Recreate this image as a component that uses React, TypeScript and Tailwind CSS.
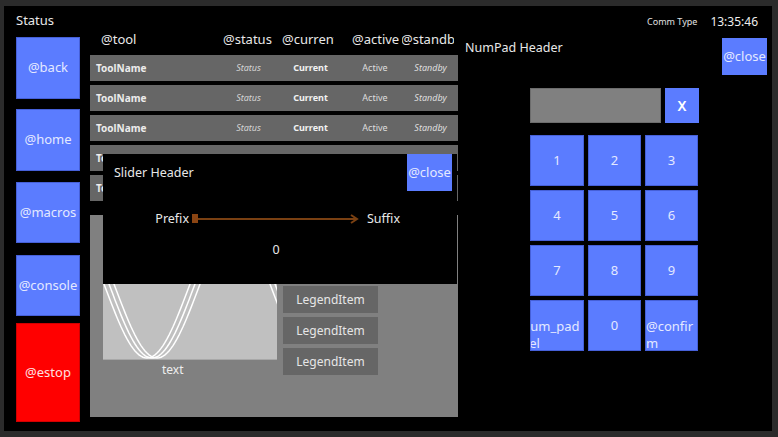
import React from "react";

function NavBtn({ className, children, red }: { className: string; children: React.ReactNode; red?: boolean }) {
  return (
    <div
      className={
        (red
          ? "bg-[#ff0000] border border-[#d00000] text-[#ffe0e0] "
          : "bg-[#5b7cff] border border-[#4660d8] text-[#e4e9ff] ") +
        "w-[64px] flex items-center justify-center text-[13px] whitespace-nowrap overflow-hidden " +
        className
      }
    >
      {children}
    </div>
  );
}

function wave(dx: number) {
  const pts: string[] = [];
  for (let x = -10; x <= 186; x += 2) {
    const y = 60 + 70 * Math.cos((2 * Math.PI * (x - 49 - dx)) / 166);
    pts.push(`${x},${y.toFixed(1)}`);
  }
  return "M" + pts.join(" L");
}

const rows = [0, 1, 2, 3, 4];

export default function App() {
  return (
    <div className="w-[778px] h-[437px] bg-[#2b2b2b] pl-[4px] pt-[6px] overflow-hidden font-['Noto_Sans','Open_Sans',sans-serif]">
      <div className="w-[768px] h-[425px] bg-black flex">
        {/* Left column */}
        <div className="ml-[12px] w-[64px] flex flex-col shrink-0">
          <div className="mt-[5px] h-[18px] leading-[18px] text-[13px] text-[#e8e8e8] whitespace-nowrap">Status</div>
          <NavBtn className="mt-[8px] h-[62px]">@back</NavBtn>
          <NavBtn className="mt-[10px] h-[62px]">@home</NavBtn>
          <NavBtn className="mt-[11px] h-[61px]">@macros</NavBtn>
          <NavBtn className="mt-[12px] h-[61px]">@console</NavBtn>
          <NavBtn red className="mt-[7px] h-[99px]">@estop</NavBtn>
        </div>

        {/* Middle column */}
        <div className="ml-[10px] w-[368px] shrink-0 relative flex flex-col pt-[23px]">
          <div className="flex h-[22px] items-center text-[13px] text-[#e8e8e8] whitespace-nowrap">
            <div className="w-[133px] pl-[11px]">@tool</div>
            <div className="w-[59px]">@status</div>
            <div className="w-[52px] overflow-hidden">@current</div>
            <div className="ml-[18px] w-[50px] overflow-hidden">@active</div>
            <div className="w-[52px] overflow-hidden">
              <span className="ml-[-1px]">@standby</span>
            </div>
          </div>
          <div className="mt-[4px] flex flex-col gap-[4px]">
            {rows.map((r) => (
              <div key={r} className="h-[26px] bg-[#666666] flex items-center whitespace-nowrap">
                <div className="w-[133px] pl-[6px] text-[10px] font-bold text-[#ececec]">ToolName</div>
                <div className="w-[51px] text-center text-[9px] italic text-[#d4d4d4]">Status</div>
                <div className="w-[73px] text-center text-[9px] font-bold text-[#f2f2f2]">Current</div>
                <div className="w-[56px] text-center text-[9px] text-[#dedede]">Active</div>
                <div className="w-[55px] text-center text-[9px] italic text-[#dedede]">Standby</div>
              </div>
            ))}
          </div>

          {/* Chart panel */}
          <div className="mt-[14px] h-[202px] bg-[#808080] flex pl-[13px] pt-[13px]">
            <div className="w-[174px] flex flex-col shrink-0">
              <div className="h-[132px] bg-[#c0c0c0] border-b border-[#a8a8a8] overflow-hidden">
                <svg width="174" height="132" viewBox="0 0 174 132">
                  {[-5, 0, 5].map((d) => (
                    <path key={d} d={wave(d)} fill="none" stroke="#ffffff" strokeWidth="1.5" />
                  ))}
                </svg>
              </div>
              <div className="mt-[1px] pl-[59px] text-[12px] leading-[17px] text-[#eeeeee]">text</div>
            </div>
            <div className="ml-[6px] mt-[58px] flex flex-col gap-[4px]">
              {[0, 1, 2].map((i) => (
                <div key={i} className="w-[95px] h-[27px] bg-[#666666] flex items-center justify-center text-[12px] text-[#e6e6e6]">
                  LegendItem
                </div>
              ))}
            </div>
          </div>

          {/* Slider modal */}
          <div className="absolute left-[13px] top-[148px] w-[354px] h-[130px] bg-black flex flex-col">
            <div className="flex items-start h-[37px]">
              <div className="ml-[11px] mt-[11px] leading-[16px] text-[12.5px] text-[#e8e8e8] whitespace-nowrap">Slider Header</div>
              <div className="ml-auto mr-[5px] w-[45px] h-[37px] bg-[#5b7cff] flex items-center justify-center text-[13px] text-[#e4e9ff] overflow-hidden whitespace-nowrap">
                @close
              </div>
            </div>
            <div className="mt-[19px] h-[18px] flex items-center">
              <div className="w-[86px] text-right text-[12.5px] text-[#e8e8e8]">Prefix</div>
              <svg className="ml-[3px]" width="168" height="10" viewBox="0 0 168 10">
                <line x1="6" y1="5" x2="165" y2="5" stroke="#7a4012" strokeWidth="2" />
                <polyline points="159,1 165,5 159,9" fill="none" stroke="#7a4012" strokeWidth="2" />
                <rect x="0" y="0" width="6" height="9" fill="#8b4513" />
              </svg>
              <div className="ml-[7px] text-[12.5px] text-[#e8e8e8]">Suffix</div>
            </div>
            <div className="mt-[14px] pr-[8px] text-center text-[12.5px] leading-[16px] text-[#e8e8e8]">0</div>
          </div>
        </div>

        {/* Right column */}
        <div className="flex-1 flex flex-col">
          <div className="mt-[3px] h-[25px] flex items-center justify-end pr-[14px] whitespace-nowrap">
            <div className="text-[9px] text-[#e0e0e0]">Comm Type</div>
            <div className="ml-[13px] text-[12px] text-[#eeeeee]">13:35:46</div>
          </div>
          <div className="mt-[4px] flex items-start">
            <div className="pl-[7px] mt-[2px] leading-[16px] text-[12.5px] text-[#e8e8e8] whitespace-nowrap">NumPad Header</div>
            <div className="ml-auto mr-[5px] w-[45px] h-[37px] bg-[#5b7cff] flex items-center justify-center text-[13px] text-[#e4e9ff] overflow-hidden whitespace-nowrap">
              @close
            </div>
          </div>
          <div className="mt-[13px] pl-[72px] flex">
            <div className="w-[131px] h-[35px] bg-[#808080] border border-[#6c6c6c]" />
            <div className="ml-[4px] w-[34px] h-[35px] bg-[#5b7cff] flex items-center justify-center text-[14px] font-semibold text-white">
              X
            </div>
          </div>
          <div className="mt-[12px] pl-[72px]">
            <div className="grid grid-cols-[54px_53px_53px] auto-rows-[51px] gap-[4px]">
              {["1", "2", "3", "4", "5", "6", "7", "8", "9"].map((k) => (
                <div key={k} className="bg-[#5b7cff] border border-[#4660d8] flex items-center justify-center text-[13px] text-[#e4e9ff]">
                  {k}
                </div>
              ))}
              <div className="bg-[#5b7cff] border border-[#4660d8] overflow-hidden flex justify-center items-start pt-[17px] text-[13px] leading-[17px] text-[#e4e9ff]">
                <div className="w-[93px] shrink-0 text-left whitespace-nowrap">
                  <div>@num_pad</div>
                  <div className="pl-[5px]">_del</div>
                </div>
              </div>
              <div className="bg-[#5b7cff] border border-[#4660d8] flex items-center justify-center text-[13px] text-[#e4e9ff]">0</div>
              <div className="bg-[#5b7cff] border border-[#4660d8] overflow-hidden pt-[17px] text-[13px] leading-[17px] text-left break-all text-[#e4e9ff]">
                @confirm
              </div>
            </div>
          </div>
        </div>
      </div>
    </div>
  );
}
